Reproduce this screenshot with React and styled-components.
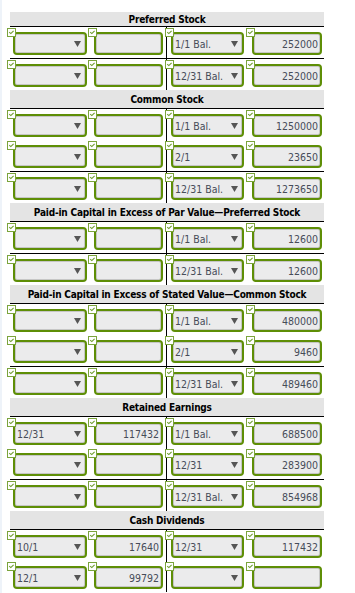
import React from 'react';
import styled, { createGlobalStyle } from 'styled-components';

// #region Data

const sections = [
  {
    title: 'Preferred Stock',
    short: true,
    rows: [
      [['', ''], ['1/1 Bal.', '252000']],
      [['', ''], ['12/31 Bal.', '252000']],
    ],
    total: true,
  },
  {
    title: 'Common Stock',
    rows: [
      [['', ''], ['1/1 Bal.', '1250000']],
      [['', ''], ['2/1', '23650']],
      [['', ''], ['12/31 Bal.', '1273650']],
    ],
    total: true,
  },
  {
    title: 'Paid-in Capital in Excess of Par Value\u2014Preferred Stock',
    rows: [
      [['', ''], ['1/1 Bal.', '12600']],
      [['', ''], ['12/31 Bal.', '12600']],
    ],
    total: true,
  },
  {
    title: 'Paid-in Capital in Excess of Stated Value\u2014Common Stock',
    rows: [
      [['', ''], ['1/1 Bal.', '480000']],
      [['', ''], ['2/1', '9460']],
      [['', ''], ['12/31 Bal.', '489460']],
    ],
    total: true,
  },
  {
    title: 'Retained Earnings',
    rows: [
      [['12/31', '117432'], ['1/1 Bal.', '688500']],
      [['', ''], ['12/31', '283900']],
      [['', ''], ['12/31 Bal.', '854968']],
    ],
    total: true,
  },
  {
    title: 'Cash Dividends',
    rows: [
      [['10/1', '17640'], ['12/31', '117432']],
      [['12/1', '99792'], ['', '']],
    ],
    total: false,
  },
];

// #endregion Data

// #region Styled Components

const GlobalStyle = createGlobalStyle`
  body {
    margin: 0;
    background: #fff;
    font-family: "DejaVu Sans Condensed", "DejaVu Sans", sans-serif;
  }
`;

const Page = styled.div`
  min-height: 593px;
  box-sizing: border-box;
  border-left: 2px solid #eef3f9;
  padding: 12px 0 0 8px;
`;

const Sheet = styled.div`
  width: 314px;
`;

const Header = styled.div`
  height: ${p => (p.$short ? 14 : 18)}px;
  background: #e4e4e4;
  border-bottom: 1px solid #000;
  display: flex;
  align-items: center;
  justify-content: center;
  font-size: 10px;
  letter-spacing: -0.2px;
  font-weight: bold;
  color: #000;
  white-space: nowrap;
`;

const Row = styled.div`
  display: grid;
  grid-template-columns: 157px 157px;
  border-top: ${p => (p.$total ? '1px solid #000' : '0')};
`;

const Side = styled.div`
  display: flex;
  align-items: flex-start;
  height: 31px;
  box-sizing: border-box;
  padding-top: 5px;
  padding-left: ${p => (p.$right ? 4 : 3)}px;
  gap: ${p => (p.$right ? 8 : 7)}px;
  border-right: ${p => (p.$right ? '0' : '1px solid #000')};
`;

const Field = styled.div`
  position: relative;
  width: ${p => p.$w}px;
  height: 23px;
  flex: none;
`;

const Box = styled.div`
  height: 100%;
  box-sizing: border-box;
  border: 2px solid #5e8e06;
  border-radius: 4px;
  background: #ebebec;
  box-shadow: inset 0 0 0 1px #c6c6c6;
  display: flex;
  align-items: center;
  justify-content: ${p => (p.$num ? 'flex-end' : 'space-between')};
  padding: 0 ${p => (p.$num ? 2 : 4)}px 0 2px;
  font-size: 10.5px;
  color: #474c59;
  white-space: nowrap;
  overflow: hidden;
`;

const Check = styled.span`
  position: absolute;
  left: -6px;
  top: -4px;
  width: 9px;
  height: 9px;
  box-sizing: border-box;
  background: #fff;
  border: 1px solid #7ba43c;
  display: flex;
  z-index: 1;
`;

// #endregion Styled Components

const Tick = () => (
  <Check>
    <svg width="7" height="7" viewBox="0 0 7 7">
      <path d="M1.2 3.2 L2.8 4.6 L5.6 1.8" fill="none" stroke="#6e9d2c" strokeWidth="1.1" />
    </svg>
  </Check>
);

const Arrow = () => (
  <svg width="7" height="6" viewBox="0 0 7 6">
    <polygon points="0,0 7,0 3.5,6" fill="#555" />
  </svg>
);

const Select = ({ value, width }) => (
  <Field $w={width}>
    <Tick />
    <Box>
      <span>{value}</span>
      <Arrow />
    </Box>
  </Field>
);

const Amount = ({ value, width }) => (
  <Field $w={width}>
    <Tick />
    <Box $num>{value}</Box>
  </Field>
);

const App = () => {
  return (
    <Page>
      <GlobalStyle />
      <Sheet>
        {sections.map(section => (
          <div key={section.title}>
            <Header $short={section.short}>{section.title}</Header>
            {section.rows.map((row, i) => (
              <Row key={i} $total={section.total && i === section.rows.length - 1}>
                <Side>
                  <Select value={row[0][0]} width={74} />
                  <Amount value={row[0][1]} width={69} />
                </Side>
                <Side $right>
                  <Select value={row[1][0]} width={73} />
                  <Amount value={row[1][1]} width={70} />
                </Side>
              </Row>
            ))}
          </div>
        ))}
      </Sheet>
    </Page>
  );
};

export default App;
